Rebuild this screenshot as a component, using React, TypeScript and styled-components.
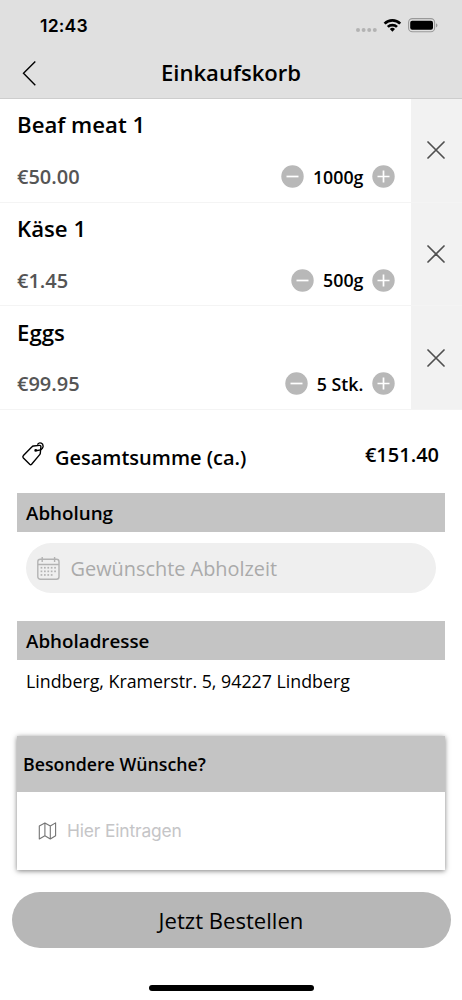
import React from "react";
import styled, { createGlobalStyle } from "styled-components";

const GlobalStyle = createGlobalStyle`
  * { box-sizing: border-box; }
  body {
    margin: 0;
    background: #fff;
    color: #000;
    font-family: "Open Sans", "Noto Sans", sans-serif;
  }
  button, input { font: inherit; color: inherit; border: 0; background: none; padding: 0; margin: 0; }
  svg { display: block; flex: none; }
`;

const Screen = styled.main`
  width: 462px;
  height: 1000px;
  display: flex;
  flex-direction: column;
  overflow: hidden;
  background: #fff;
`;

const TopArea = styled.header`
  height: 99px;
  flex: none;
  background: #e0e0e0;
  border-bottom: 1px solid #cdcdcd;
`;

const StatusBar = styled.div`
  height: 50px;
  padding: 0 23px 0 40px;
  display: flex;
  align-items: center;
  justify-content: space-between;
`;

const Clock = styled.span`
  font: 600 17.6px/22px Inter, sans-serif;
  letter-spacing: 0.2px;
  padding-top: 1px;
`;

const NavBar = styled.div`
  height: 46px;
  padding: 0 22px;
  display: grid;
  grid-template-columns: 16px 1fr 16px;
  align-items: center;
`;

const BackButton = styled.button`
  width: 16px;
  height: 26px;
`;

const PageTitle = styled.h1`
  margin: 0;
  text-align: center;
  font-size: 22.1px;
  font-weight: 600;
  line-height: 30px;
  padding-bottom: 2px;
`;

const CartList = styled.ul`
  list-style: none;
  margin: 0;
  padding: 0;
`;

const CartRow = styled.li`
  height: 103.7px;
  display: grid;
  grid-template-columns: 1fr 51px;
  border-bottom: 1px solid #f4f4f4;
`;

const ItemBody = styled.div`
  padding: 11.4px 16px 0 17px;
  display: flex;
  flex-direction: column;
  gap: 21.2px;
`;

const ItemName = styled.h2`
  margin: 0;
  font-size: 22.2px;
  font-weight: 600;
  line-height: 30px;
`;

const ItemFooter = styled.div`
  height: 30px;
  display: flex;
  align-items: center;
  justify-content: space-between;
`;

const ItemPrice = styled.span`
  font-size: 20px;
  font-weight: 600;
  color: #555;
`;

const Stepper = styled.div`
  display: flex;
  align-items: center;
  gap: 8.6px;
`;

const Amount = styled.span`
  font-size: 17.8px;
  font-weight: 600;
  line-height: 24px;
`;

const RoundButton = styled.button`
  width: 23px;
  height: 23px;
`;

const DeleteButton = styled.button`
  display: flex;
  align-items: center;
  justify-content: center;
  padding-right: 1px;
  background: #f2f2f2;
`;

const Content = styled.section`
  padding: 0 17px;
`;

const TotalRow = styled.div`
  height: 83px;
  padding: 0 6px 0 5px;
  display: flex;
  align-items: flex-start;
`;

const TagSlot = styled.span`
  padding-top: 32px;
`;

const TotalLabel = styled.span`
  margin: 33px auto 0 11px;
  font-size: 20px;
  font-weight: 600;
  line-height: 30px;
`;

const TotalValue = styled.span`
  margin-top: 30px;
  font-size: 20px;
  font-weight: 600;
  line-height: 30px;
`;

const SectionBar = styled.h3`
  height: 39px;
  margin: 0;
  padding: 0 9px;
  font-size: 18.8px;
  font-weight: 600;
  line-height: 41px;
  background: #c4c4c4;
`;

const TimeField = styled.button`
  width: 410px;
  height: 50px;
  margin: 11px 9px 28px;
  padding: 0 11px;
  display: flex;
  align-items: center;
  gap: 10.5px;
  border-radius: 25px;
  background: #efefef;
  color: #aaa;
  font-size: 19.9px;
`;

const Address = styled.p`
  height: 76px;
  margin: 0;
  padding: 9px 9px 0;
  font-size: 17.8px;
  line-height: 25px;
`;

const WishCard = styled.div`
  height: 134px;
  background: #fff;
  box-shadow: 0 1px 5px rgba(0, 0, 0, 0.5);
`;

const WishHeader = styled.h3`
  height: 56px;
  margin: 0;
  padding: 0 6px;
  font-size: 17.75px;
  font-weight: 600;
  line-height: 56px;
  background: #c4c4c4;
`;

const WishField = styled.div`
  height: 78px;
  padding: 0 20px;
  display: flex;
  align-items: center;
  gap: 9px;
  font: 400 17.4px/24px Inter, sans-serif;
  letter-spacing: -0.15px;
  color: #c5c5c7;
`;

const OrderButton = styled.button`
  width: 439px;
  height: 56px;
  margin: 22px 0 0 11.5px;
  flex: none;
  border-radius: 28px;
  background: #b7b7b7;
  font-size: 22.1px;
`;

const HomeIndicator = styled.div`
  width: 165px;
  height: 6px;
  margin: 37px auto 0;
  flex: none;
  border-radius: 3px;
  background: #000;
`;

const StatusIcons = () => (
  <svg width="84" height="20" viewBox="355 15 84 20">
    <g fill="#b3b3b3">
      <circle cx="358" cy="30" r="2" />
      <circle cx="363.6" cy="30" r="2" />
      <circle cx="369.2" cy="30" r="2" />
      <circle cx="374.8" cy="30" r="2" />
    </g>
    <g fill="none" stroke="#000" strokeWidth="2.7">
      <path d="M384.6 23.6a11 11 0 0 1 15.6 0" />
      <path d="M387.8 26.9a6.6 6.6 0 0 1 9.2 0" />
    </g>
    <path d="M389.8 29.1a3.7 3.7 0 0 1 5.2 0l-2.6 2.7z" fill="#000" />
    <rect x="408.6" y="18.6" width="26" height="13.2" rx="3.8" fill="none" stroke="#999" strokeWidth="1.1" />
    <rect x="410.2" y="20.8" width="22.8" height="9" rx="2" fill="#000" />
    <path d="M436 23.2c2 .8 2 3.4 0 4.3z" fill="#999" />
  </svg>
);

const StepIcon = ({ plus = false }: { plus?: boolean }) => (
  <svg width="23" height="23" viewBox="0 0 23 23">
    <circle cx="11.5" cy="11.5" r="11.2" fill="#b8b8b8" />
    <path d={plus ? "M5.5 11.5h12M11.5 5.5v12" : "M5.5 11.5h12"} stroke="#fff" strokeWidth="1.7" />
  </svg>
);

const CloseIcon = () => (
  <svg width="18" height="18" viewBox="0 0 18 18">
    <path d="M1 1l16 16M17 1L1 17" stroke="#505050" strokeWidth="1.7" strokeLinecap="round" />
  </svg>
);

const TagIcon = () => (
  <svg width="22" height="24" viewBox="0 0 22 24" fill="none" stroke="#000" strokeWidth="1.4" strokeLinejoin="round" strokeLinecap="round">
    <path d="M1.4 13.6L10 4.8Q10.6 4.1 11.4 4L17.4 3.4Q19 3.3 18.9 4.9L18.3 11.3Q18.2 12 17.7 12.6L9.6 22.2Q8.7 23.2 7.7 22.3L1.4 16Q.4 14.8 1.4 13.6Z" />
    <path d="M13.8 8.4Q20 9 21 4.9C21.6 1 17.4-.2 15.8 2.2" />
    <circle cx="13.7" cy="8.4" r=".7" fill="#000" />
  </svg>
);

const dotColumns = [4.4, 7.8, 11.2, 14.6, 18];

const CalendarIcon = () => (
  <svg width="23" height="23" viewBox="0 0 23 23" fill="none" stroke="#b3b3b3" strokeWidth="1.4">
    <rect x=".8" y="2.2" width="21.2" height="20" rx="2.5" />
    <path d="M1 7.5h21M5.2 0v5M17.6 0v5" />
    <g stroke="none" fill="#b3b3b3">
      {[10.7, 14.3, 17.9].map((y, row) =>
        dotColumns
          .filter((_, i) => !(row === 2 && i === 4))
          .map((x) => <rect key={`${x}-${y}`} x={x - 0.8} y={y - 0.8} width="1.7" height="1.7" />),
      )}
    </g>
  </svg>
);

const MapIcon = () => (
  <svg width="21" height="18" viewBox="0 0 21 18" fill="none" stroke="#747474" strokeWidth="1.1" strokeLinejoin="round">
    <path d="M2.3 4L7.9.9L13.3 4L18.6.9V13.8L13.3 17L7.9 13.8L2.3 17ZM7.9.9V13.8M13.3 4V17" />
  </svg>
);

const items = [
  { name: "Beaf meat 1", price: "€50.00", amount: "1000g" },
  { name: "Käse 1", price: "€1.45", amount: "500g" },
  { name: "Eggs", price: "€99.95", amount: "5 Stk." },
];

export default function App() {
  return (
    <Screen>
      <GlobalStyle />
      <TopArea>
        <StatusBar>
          <Clock>12:43</Clock>
          <StatusIcons />
        </StatusBar>
        <NavBar>
          <BackButton aria-label="Zurück">
            <svg width="16" height="26" viewBox="0 0 16 26" fill="none" stroke="#000" strokeWidth="1.4">
              <path d="M13.3 1.4L1.5 13.3L13.3 25.2" />
            </svg>
          </BackButton>
          <PageTitle>Einkaufskorb</PageTitle>
        </NavBar>
      </TopArea>
      <CartList>
        {items.map((item) => (
          <CartRow key={item.name}>
            <ItemBody>
              <ItemName>{item.name}</ItemName>
              <ItemFooter>
                <ItemPrice>{item.price}</ItemPrice>
                <Stepper>
                  <RoundButton aria-label="Weniger"><StepIcon /></RoundButton>
                  <Amount>{item.amount}</Amount>
                  <RoundButton aria-label="Mehr"><StepIcon plus /></RoundButton>
                </Stepper>
              </ItemFooter>
            </ItemBody>
            <DeleteButton aria-label="Entfernen"><CloseIcon /></DeleteButton>
          </CartRow>
        ))}
      </CartList>
      <Content>
        <TotalRow>
          <TagSlot><TagIcon /></TagSlot>
          <TotalLabel>Gesamtsumme (ca.)</TotalLabel>
          <TotalValue>€151.40</TotalValue>
        </TotalRow>
        <SectionBar>Abholung</SectionBar>
        <TimeField>
          <CalendarIcon />
          <span>Gewünschte Abholzeit</span>
        </TimeField>
        <SectionBar>Abholadresse</SectionBar>
        <Address>Lindberg, Kramerstr. 5, 94227 Lindberg</Address>
        <WishCard>
          <WishHeader>Besondere Wünsche?</WishHeader>
          <WishField>
            <MapIcon />
            <span>Hier Eintragen</span>
          </WishField>
        </WishCard>
      </Content>
      <OrderButton>Jetzt Bestellen</OrderButton>
      <HomeIndicator />
    </Screen>
  );
}
